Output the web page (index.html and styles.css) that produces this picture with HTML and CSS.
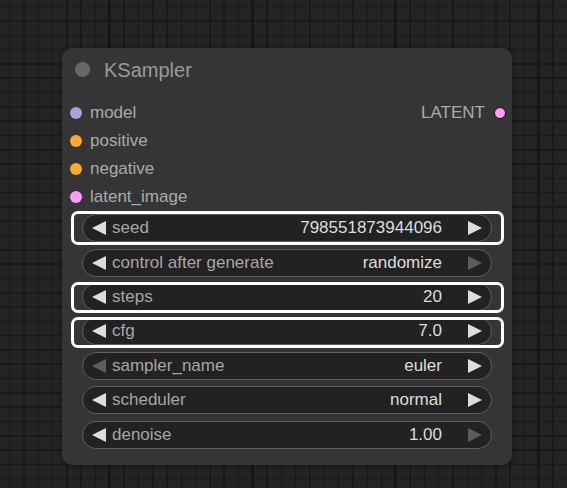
FILE: index.html
```html
<!DOCTYPE html>
<html>
<head>
<meta charset="utf-8">
<link rel="stylesheet" href="styles.css">
</head>
<body>
<div class="canvas">
  <div class="node">
    <div class="title"><span class="tdot"></span><span class="ttext">KSampler</span></div>
    <div class="slots">
      <div class="slot"><span class="in"><i class="dot c-model"></i>model</span><span class="out">LATENT<i class="dot c-latent outdot"></i></span></div>
      <div class="slot"><span class="in"><i class="dot c-cond"></i>positive</span></div>
      <div class="slot"><span class="in"><i class="dot c-cond"></i>negative</span></div>
      <div class="slot"><span class="in"><i class="dot c-latent"></i>latent_image</span></div>
    </div>
    <div class="widgets">
      <div class="wrow"><div class="pill hl hl-seed">
        <svg class="arr" viewBox="0 0 14 14"><polygon points="14,0 14,14 0,7"/></svg>
        <span class="lbl">seed</span><span class="val">798551873944096</span>
        <svg class="arr" viewBox="0 0 14 14"><polygon points="0,0 0,14 14,7"/></svg>
      </div></div>
      <div class="wrow"><div class="pill">
        <svg class="arr" viewBox="0 0 14 14"><polygon points="14,0 14,14 0,7"/></svg>
        <span class="lbl">control after generate</span><span class="val">randomize</span>
        <svg class="arr dim" viewBox="0 0 14 14"><polygon points="0,0 0,14 14,7"/></svg>
      </div></div>
      <div class="wrow"><div class="pill hl hl-steps">
        <svg class="arr" viewBox="0 0 14 14"><polygon points="14,0 14,14 0,7"/></svg>
        <span class="lbl">steps</span><span class="val">20</span>
        <svg class="arr" viewBox="0 0 14 14"><polygon points="0,0 0,14 14,7"/></svg>
      </div></div>
      <div class="wrow"><div class="pill hl hl-cfg">
        <svg class="arr" viewBox="0 0 14 14"><polygon points="14,0 14,14 0,7"/></svg>
        <span class="lbl">cfg</span><span class="val">7.0</span>
        <svg class="arr" viewBox="0 0 14 14"><polygon points="0,0 0,14 14,7"/></svg>
      </div></div>
      <div class="wrow"><div class="pill">
        <svg class="arr dim" viewBox="0 0 14 14"><polygon points="14,0 14,14 0,7"/></svg>
        <span class="lbl">sampler_name</span><span class="val">euler</span>
        <svg class="arr" viewBox="0 0 14 14"><polygon points="0,0 0,14 14,7"/></svg>
      </div></div>
      <div class="wrow"><div class="pill">
        <svg class="arr" viewBox="0 0 14 14"><polygon points="14,0 14,14 0,7"/></svg>
        <span class="lbl">scheduler</span><span class="val">normal</span>
        <svg class="arr" viewBox="0 0 14 14"><polygon points="0,0 0,14 14,7"/></svg>
      </div></div>
      <div class="wrow"><div class="pill">
        <svg class="arr" viewBox="0 0 14 14"><polygon points="14,0 14,14 0,7"/></svg>
        <span class="lbl">denoise</span><span class="val">1.00</span>
        <svg class="arr dim" viewBox="0 0 14 14"><polygon points="0,0 0,14 14,7"/></svg>
      </div></div>
    </div>
  </div>
</div>
</body>
</html>
```

FILE: styles.css
```css
html, body {
  margin: 0;
  padding: 0;
}
body {
  width: 567px;
  height: 488px;
  overflow: hidden;
  font-family: "Liberation Sans", Arial, sans-serif;
}
.canvas {
  width: 567px;
  height: 488px;
  box-sizing: border-box;
  padding: 48px 0 0 62px;
  background-color: #242424;
  background-image:
    repeating-linear-gradient(to right, transparent 0 108px, #161616 108px 110px, transparent 110px 143px),
    repeating-linear-gradient(to right, transparent 0 9px, #191919 9px 10.5px, transparent 10.5px 14.3px),
    repeating-linear-gradient(to bottom, transparent 0 6px, #191919 6px 7.5px, transparent 7.5px 14.3px);
}
.node {
  width: 450px;
  height: 417px;
  background: #353535;
  border-radius: 10px;
  box-shadow: 0 1px 6px rgba(0, 0, 0, 0.45);
  display: flex;
  flex-direction: column;
}
.title {
  height: 42px;
  border-bottom: 1px solid #2f2f2f;
  display: flex;
  align-items: center;
  padding-left: 13px;
  gap: 14px;
}
.tdot {
  width: 15px;
  height: 15px;
  border-radius: 50%;
  background: #686868;
}
.ttext {
  font-size: 20px;
  color: #9a9a9a;
  position: relative;
  top: 1px;
}
.slots {
  padding: 8px 6px 0 8px;
}
.slot {
  height: 28px;
  display: flex;
  align-items: center;
  justify-content: space-between;
  font-size: 17px;
  color: #aaaaaa;
}
.in, .out {
  display: flex;
  align-items: center;
  gap: 8px;
}
.out {
  margin-left: auto;
  gap: 9px;
}
.dot {
  display: block;
  width: 12px;
  height: 12px;
  border-radius: 50%;
}
.c-model { background: #b39ddb; }
.c-cond { background: #ffa931; }
.c-latent { background: #ff9cf9; }
.outdot {
  box-sizing: border-box;
  border: 1px solid #111;
}
.widgets {
  display: flex;
  flex-direction: column;
}
.wrow {
  height: 34.4px;
  display: flex;
  align-items: center;
  padding: 0 20.5px 0 20px;
}
.pill {
  position: relative;
  flex: 1;
  height: 28px;
  box-sizing: border-box;
  border: 1px solid #5e5e5e;
  border-radius: 14px;
  background: #222222;
  display: flex;
  align-items: center;
  padding: 0 8.5px 0 9px;
  font-size: 17px;
}
.arr {
  width: 14px;
  height: 14px;
  fill: #dddddd;
  flex: none;
}
.arr.dim {
  fill: #5c5c5c;
}
.lbl {
  margin-left: 6px;
  color: #a6a6a6;
}
.val {
  margin-left: auto;
  margin-right: 26px;
  color: #dddddd;
}
.hl::after {
  content: "";
  position: absolute;
  border: 3px solid #ffffff;
  border-radius: 7px;
  pointer-events: none;
}
.hl-seed::after {
  left: -12.5px;
  right: -13px;
  top: -4.5px;
  bottom: -4px;
}
.hl-steps::after {
  left: -12.5px;
  right: -13px;
  top: -1.5px;
  bottom: -3.5px;
}
.hl-cfg::after {
  left: -12.5px;
  right: -13px;
  top: -1.5px;
  bottom: -3.5px;
}
```
